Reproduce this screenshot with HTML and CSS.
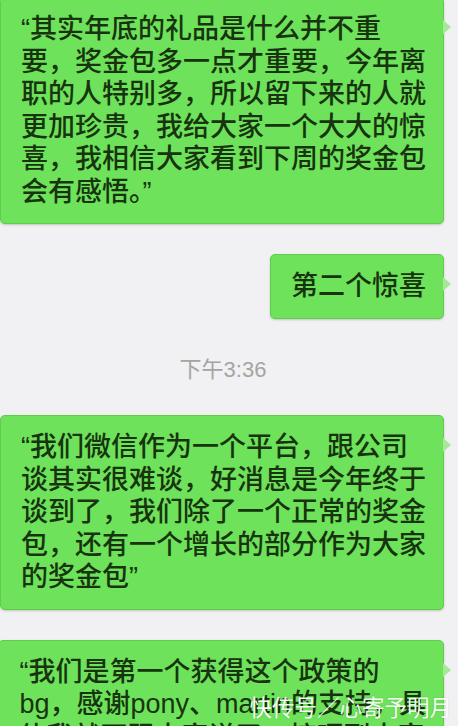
FILE: index.html
```html
<!DOCTYPE html>
<html lang="zh-CN">
<head>
  <meta charset="UTF-8">
  <meta name="viewport" content="width=device-width, initial-scale=1.0">
  <title>聊天记录</title>
  <link rel="stylesheet" href="styles.css">
</head>
<body>
  <div class="chat">
    <div class="bubble">“其实年底的礼品是什么并不重<br>要，奖金包多一点才重要，今年离<br>职的人特别多，所以留下来的人就<br>更加珍贵，我给大家一个大大的惊<br>喜，我相信大家看到下周的奖金包<br>会有感悟。”</div>

    <div class="bubble">第二个惊喜</div>

    <div class="time">下午3:36</div>

    <div class="bubble">“我们微信作为一个平台，跟公司<br>谈其实很难谈，好消息是今年终于<br>谈到了，我们除了一个正常的奖金<br>包，还有一个增长的部分作为大家<br>的奖金包”</div>

    <div class="bubble">“我们是第一个获得这个政策的<br>bg，感谢pony、martin的支持，具<br>体我就不跟大家说了，惊呀到大家</div>
  </div>

  <!-- 水印 -->
  <div class="watermark">快传号／心寄予明月</div>
</body>
</html>
```

FILE: styles.css
```css
* {
  box-sizing: border-box;
}
html, body {
  height: 100%;
}
body {
  margin: 0;
  background-color: #f1f0f2;
  font-family: "Liberation Sans", "Noto Sans CJK SC", sans-serif;
  overflow: hidden;
  position: relative;
}
.chat {
  display: flex;
  flex-direction: column;
  align-items: flex-end;
  gap: 30px;
  width: 444px;
  padding-left: 2px;
  margin-top: -3px;
}
.bubble {
  position: relative;
  background-color: #6de25a;
  color: #17340f;
  font-size: 27px;
  font-weight: 500;
  line-height: 32.5px;
  padding: 15px 17px 15px 20px;
  border-radius: 5px;
  border: 1px solid #5fcc4c;
  box-shadow: 0 1px 2px rgba(40, 90, 30, 0.25);
  white-space: nowrap;
}
.bubble::after {
  content: "";
  position: absolute;
  left: 100%;
  top: 22px;
  border-top: 7px solid transparent;
  border-bottom: 7px solid transparent;
  border-left: 8px solid #a6e897;
}
.time {
  align-self: center;
  font-size: 22px;
  line-height: 24px;
  padding: 9px 0 3.5px;
  color: #a4a4a4;
}
.watermark {
  position: absolute;
  right: 6px;
  bottom: 4px;
  font-size: 22.5px;
  line-height: 26px;
  color: rgba(255, 255, 255, 0.95);
  text-shadow: 0 0 2px rgba(0, 0, 0, 0.12);
}
```
